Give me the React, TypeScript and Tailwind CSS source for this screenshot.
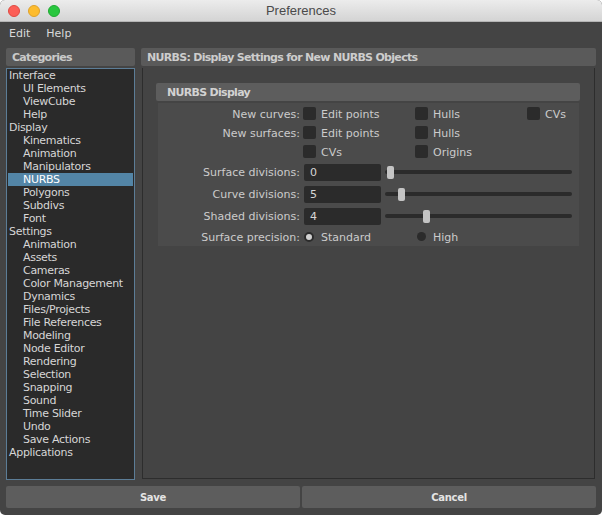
import React from "react";

const categories: { label: string; child?: boolean; selected?: boolean }[] = [
  { label: "Interface" },
  { label: "UI Elements", child: true },
  { label: "ViewCube", child: true },
  { label: "Help", child: true },
  { label: "Display" },
  { label: "Kinematics", child: true },
  { label: "Animation", child: true },
  { label: "Manipulators", child: true },
  { label: "NURBS", child: true, selected: true },
  { label: "Polygons", child: true },
  { label: "Subdivs", child: true },
  { label: "Font", child: true },
  { label: "Settings" },
  { label: "Animation", child: true },
  { label: "Assets", child: true },
  { label: "Cameras", child: true },
  { label: "Color Management", child: true },
  { label: "Dynamics", child: true },
  { label: "Files/Projects", child: true },
  { label: "File References", child: true },
  { label: "Modeling", child: true },
  { label: "Node Editor", child: true },
  { label: "Rendering", child: true },
  { label: "Selection", child: true },
  { label: "Snapping", child: true },
  { label: "Sound", child: true },
  { label: "Time Slider", child: true },
  { label: "Undo", child: true },
  { label: "Save Actions", child: true },
  { label: "Applications" },
];

function Check({ label, last }: { label: string; last?: boolean }) {
  return (
    <div className={"flex items-center shrink-0 " + (last ? "" : "w-[112px]")}>
      <div className="w-[13px] h-[13px] rounded-[2px] bg-[#2b2b2b] shrink-0" />
      <span className="ml-[5px] pt-px">{label}</span>
    </div>
  );
}

function SliderRow({ label, value, thumb }: { label: string; value: string; thumb: number }) {
  return (
    <div className="flex items-center h-[22px]">
      <div className="w-[142px] shrink-0 text-right">{label}</div>
      <div className="ml-[4px] w-[77px] h-[17px] shrink-0 rounded-[2px] bg-[#2b2b2b] flex items-center pl-[6px] text-[#d6d6d6]">
        {value}
      </div>
      <div className="ml-[4px] w-[187px] h-[13px] shrink-0 relative">
        <div className="absolute left-0 right-0 top-[4.5px] h-[4px] rounded-full bg-[#2b2b2b]" />
        <div
          className="absolute top-0 w-[7px] h-[13px] rounded-[2px] bg-[#c4c4c4]"
          style={{ left: thumb }}
        />
      </div>
    </div>
  );
}

export default function App() {
  return (
    <div className="w-[602px] h-[515px] bg-[#444444] flex flex-col overflow-hidden rounded-[5px] font-['DejaVu_Sans',sans-serif] text-[11px] leading-[13px]">
      {/* Title bar */}
      <div className="h-[22px] relative flex items-center justify-center bg-linear-to-b from-[#ececec] to-[#d4d4d4] border-b border-[#b5b5b5] shrink-0">
        <div className="absolute left-[8px] top-[5px] flex gap-[8px]">
          <div className="w-[12px] h-[12px] rounded-full bg-[#fc5f57] border border-[#de4a42]" />
          <div className="w-[12px] h-[12px] rounded-full bg-[#fdbc2e] border border-[#dea12a]" />
          <div className="w-[12px] h-[12px] rounded-full bg-[#29c73f] border border-[#20a932]" />
        </div>
        <span className="font-['Liberation_Sans',sans-serif] text-[13px] text-[#4a4a4a]">Preferences</span>
      </div>

      {/* Menu bar */}
      <div className="h-[22px] flex items-center pl-[9px] gap-[16px] text-[#dadada] shrink-0">
        <span>Edit</span>
        <span>Help</span>
      </div>

      {/* Main */}
      <div className="flex px-[6px] pt-[4px] gap-[6px] h-[436px] shrink-0">
        {/* Left */}
        <div className="w-[129px] flex flex-col">
          <div className="h-[18px] bg-[#5a5a5a] rounded-[2px] pl-[6px] flex items-center font-bold tracking-[-0.7px] text-[#c9c9c9]">
            Categories
          </div>
          <div className="mt-[2px] h-[412px] border border-[#5c7d97] bg-[#2a2a2a] px-px">
            {categories.map((c, i) => (
              <div
                key={i}
                className={
                  "h-[13px] pt-px leading-[12px] tracking-[-0.3px] " +
                  (c.child ? "pl-[15px] " : "pl-[1px] ") +
                  (c.selected ? "bg-[#5385a6] text-white" : "text-[#d6d6d6]")
                }
              >
                {c.label}
              </div>
            ))}
          </div>
        </div>

        {/* Right */}
        <div className="w-[455px] flex flex-col">
          <div className="h-[18px] bg-[#5a5a5a] rounded-[2px] pl-[6px] flex items-center font-bold tracking-[-0.7px] text-[#cdcdcd]">
            NURBS: Display Settings for New NURBS Objects
          </div>
          <div className="mt-[2px] mx-px h-[411px] border-x border-b border-[#2d2d2d] pt-[15px] pl-[13px] pr-[14px]">
            <div className="h-[18px] bg-[#5d5d5d] rounded-[2px] pl-[11px] flex items-center font-bold tracking-[-0.7px] text-[#d2d2d2]">
              NURBS Display
            </div>
            <div className="mt-[2px] ml-[2px] mr-px h-[143px] bg-[#4b4b4b] pt-px text-[#cccccc]">
              <div className="flex items-center h-[19px]">
                <div className="w-[142px] shrink-0 text-right pt-px">New curves:</div>
                <div className="ml-[3px] flex">
                  <Check label="Edit points" />
                  <Check label="Hulls" />
                  <Check label="CVs" last />
                </div>
              </div>
              <div className="flex items-center h-[19px]">
                <div className="w-[142px] shrink-0 text-right pt-px">New surfaces:</div>
                <div className="ml-[3px] flex">
                  <Check label="Edit points" />
                  <Check label="Hulls" last />
                </div>
              </div>
              <div className="flex items-center h-[19px]">
                <div className="w-[142px] shrink-0" />
                <div className="ml-[3px] flex">
                  <Check label="CVs" />
                  <Check label="Origins" last />
                </div>
              </div>
              <SliderRow label="Surface divisions:" value="0" thumb={2} />
              <SliderRow label="Curve divisions:" value="5" thumb={13} />
              <SliderRow label="Shaded divisions:" value="4" thumb={38} />
              <div className="flex items-center h-[19px]">
                <div className="w-[142px] shrink-0 text-right pt-px">Surface precision:</div>
                <div className="ml-[4px] w-[113px] shrink-0 flex items-center">
                  <div className="w-[10px] h-[10px] rounded-full bg-[#d2d2d2] border-2 border-[#2b2b2b] shrink-0" />
                  <span className="ml-[7px] pt-px">Standard</span>
                </div>
                <div className="flex items-center">
                  <div className="w-[9px] h-[9px] rounded-full bg-[#2b2b2b] shrink-0" />
                  <span className="ml-[7px] pt-px">High</span>
                </div>
              </div>
            </div>
          </div>
        </div>
      </div>

      {/* Buttons */}
      <div className="flex gap-[2px] px-[6px] pt-[6px] shrink-0">
        <div className="w-[294px] h-[22px] bg-[#5d5d5d] rounded-[2px] flex items-center justify-center font-bold text-[10px] tracking-[-0.3px] text-[#e4e4e4]">
          Save
        </div>
        <div className="w-[294px] h-[22px] bg-[#5d5d5d] rounded-[2px] flex items-center justify-center font-bold text-[10px] tracking-[-0.3px] text-[#e4e4e4]">
          Cancel
        </div>
      </div>
    </div>
  );
}
